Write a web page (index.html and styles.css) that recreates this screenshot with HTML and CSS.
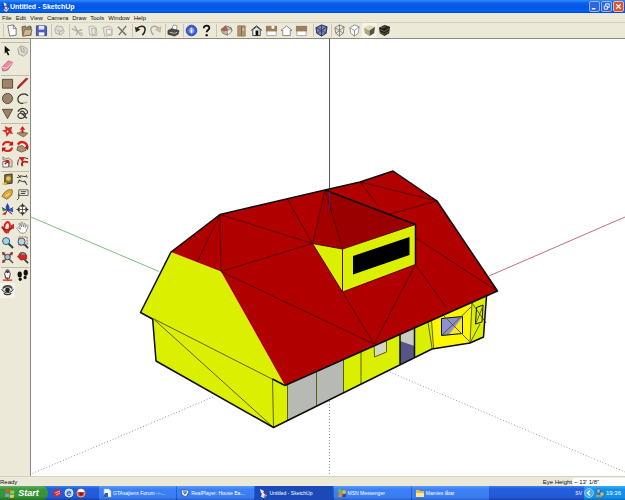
FILE: index.html
```html
<!DOCTYPE html>
<html lang="en">
<head>
<meta charset="utf-8">
<title>Untitled - SketchUp</title>
<link rel="stylesheet" href="styles.css">
</head>
<body>
<div class="desktop">
<header class="titlebar">
  <svg class="app-icon" viewBox="0 0 10 12"><path d="M2 1l4 2v3l-3-1zM4 6l5 2-3 4-3-2z" fill="#dfe9f5"/><path d="M5 5l3 2-2 3" stroke="#c03a28" fill="none"/><path d="M2 1l1 5 2 4" stroke="#1b2f6b" fill="none"/></svg>
  <h1 class="title">Untitled - SketchUp</h1>
  <div class="window-buttons">
    <button class="win" aria-label="Minimize"><svg viewBox="0 0 10 10"><path d="M2 7.500h4" stroke="#fff" stroke-width="1.500"/></svg></button>
    <button class="win" aria-label="Restore"><svg viewBox="0 0 10 10"><path d="M4 4V2h4v4H6M2.500 4.500h3.500v3.500h-3.500z" stroke="#fff" fill="none"/></svg></button>
    <button class="win close" aria-label="Close"><svg viewBox="0 0 10 10"><path d="M2.500 2.500l5 5m0-5l-5 5" stroke="#fff" stroke-width="1.300"/></svg></button>
  </div>
</header>
<nav class="menubar">
  <button>File</button><button>Edit</button><button>View</button><button>Camera</button><button>Draw</button><button>Tools</button><button>Window</button><button>Help</button>
</nav>
<div class="toolbar">
  <div class="group">
    <button aria-label="New"><svg viewBox="0 0 14 14"><path d="M3 2l6-1 3 4v7l-7 1z" fill="#fff" stroke="#555" stroke-width=".8"/><path d="M9 1v4h3" fill="none" stroke="#555" stroke-width=".7"/></svg></button>
    <button aria-label="Open"><svg viewBox="0 0 14 14"><path d="M2 3l4-1 1 2 5-1v9l-9 1z" fill="#a48a62" stroke="#4d4634" stroke-width=".7"/><path d="M5 6h8l-2 6-8 1z" fill="#cdb68b" stroke="#5b4d34" stroke-width=".6"/><path d="M8 3l3-1 1 2" stroke="#2d6f8a" fill="none"/></svg></button>
    <button aria-label="Save"><svg viewBox="0 0 14 14"><path d="M1.500 2h10l1 1v9.500h-11z" fill="#4a5fc0" stroke="#2a3780" stroke-width=".8"/><path d="M4 2h6v4H4z" fill="#e6ebfb"/><path d="M4 9h6v3.500H4z" fill="#fff"/></svg></button>
  </div>
  <div class="group">
    <button aria-label="Make Component"><svg viewBox="0 0 14 14"><path d="M4 2l6 1 2 5-3 4-6-2-1-4z" fill="#deddd2" stroke="#b0afa6"/><path d="M4 6l3 2 4-1M7 8v4" stroke="#aaa" fill="none"/></svg></button>
  </div>
  <div class="group">
    <button aria-label="Cut"><svg viewBox="0 0 14 14"><path d="M4 2l3 6 3 3M1 5l6 3 5-2M7 8l-1 4" stroke="#aaa9a1" fill="none" stroke-width="1.300"/><circle cx="11" cy="11" r="1.500" fill="none" stroke="#aaa9a1"/></svg></button>
    <button aria-label="Copy"><svg viewBox="0 0 14 14"><path d="M3 3l5-1 2 2v7l-6 1zM6 5l5-1 1 8-5 1z" fill="#e9e8de" stroke="#b3b2a9"/></svg></button>
    <button aria-label="Paste"><svg viewBox="0 0 14 14"><path d="M2 4l7-2 3 3v7l-8 1z" fill="#e3e2d8" stroke="#b3b2a9"/><path d="M6 6h5v5H6z" fill="#f3f2ea" stroke="#b9b8af"/></svg></button>
    <button aria-label="Delete"><svg viewBox="0 0 14 14"><path d="M2 3l9 9M11 2l-8 10" stroke="#77766f" stroke-width="1.600"/></svg></button>
  </div>
  <div class="group">
    <button aria-label="Undo"><svg viewBox="0 0 14 14"><path d="M3 5c4-4 9-3 9 1 0 2-1 4-3 6" stroke="#26221c" fill="none" stroke-width="1.600"/><path d="M1 3l1 6 5-3z" fill="#26221c"/></svg></button>
    <button aria-label="Redo"><svg viewBox="0 0 14 14"><path d="M11 5c-4-4-9-3-9 1 0 2 1 4 3 6" stroke="#a5a49b" fill="none" stroke-width="1.400"/><path d="M13 3l-1 6-5-3z" fill="#c5c4ba" stroke="#a5a49b" stroke-width=".6"/></svg></button>
  </div>
  <div class="group">
    <button aria-label="Print"><svg viewBox="0 0 14 14"><path d="M5 6l2-5 4 1-1 5z" fill="#fff" stroke="#555" stroke-width=".6"/><path d="M1 7l4-2 8 2-1 4-4 2-7-2z" fill="#4b4a46" stroke="#222" stroke-width=".6"/><path d="M3 9l5 1 3-1" stroke="#c8c6b8" fill="none"/></svg></button>
  </div>
  <div class="group">
    <button aria-label="Model Info"><svg viewBox="0 0 14 14"><circle cx="7" cy="7" r="5.700" fill="#3f5fd0" stroke="#2743a4"/><circle cx="7" cy="7" r="3" fill="#86a0ef"/><path d="M7 4v1M7 6v4" stroke="#fff" stroke-width="1.500"/></svg></button>
    <button aria-label="Help"><svg viewBox="0 0 14 14"><path d="M4 4.500C4 0.500 10.500 1 10 4.500 9.800 6.500 7.200 6.500 7.200 9" stroke="#111" fill="none" stroke-width="2"/><circle cx="7.200" cy="12" r="1.300" fill="#111"/></svg></button>
  </div>
  <div class="group views">
    <button aria-label="Iso"><svg viewBox="0 0 14 14"><path d="M1 6l5-4 6 2 1 3-5 5-5-2z" fill="#c9b9a4" stroke="#5d4b3d" stroke-width=".7"/><path d="M1 6l5-4 3 5-5 1z" fill="#9f6554"/><path d="M8 7l4-2v4l-4 3z" fill="#f4f1e8" stroke="#555" stroke-width=".5"/></svg></button>
    <button aria-label="Top"><svg viewBox="0 0 14 14"><path d="M3 2h8v11H3z" fill="#b3946b" stroke="#7d6647" stroke-width=".7"/><path d="M7 2v11" stroke="#7d6647"/><path d="M8 5h2v2H8z" fill="#dfcfb5"/></svg></button>
    <button aria-label="Front"><svg viewBox="0 0 14 14"><path d="M1 7l6-5 6 5M3 6v6.500h8V6L7 3z" fill="#fff" stroke="#333"/><path d="M6 7h3v5.500H6z" fill="#111"/></svg></button>
    <button aria-label="Right"><svg viewBox="0 0 14 14"><path d="M2 7h10v5.500H2z" fill="#fff" stroke="#888" stroke-width=".7"/><path d="M1 2h12v6H1z" fill="#9b7f61"/><path d="M7 2h3v3H7z" fill="#fff"/></svg></button>
    <button aria-label="Back"><svg viewBox="0 0 14 14"><path d="M1 7l6-5 6 5h-2v5.500H3V7z" fill="#fff" stroke="#777" stroke-width=".9"/></svg></button>
    <button aria-label="Left"><svg viewBox="0 0 14 14"><path d="M2 7h10v5.500H2z" fill="#fff" stroke="#888" stroke-width=".7"/><path d="M1 2h12v6H1z" fill="#9b7f61"/></svg></button>
  </div>
  <div class="group">
    <button aria-label="X-Ray"><svg viewBox="0 0 14 14"><path d="M1 4l6-3 6 2-1 7-5 3-5-3z" fill="#777fb8" stroke="#222850"/><path d="M1 4l6 3 6-4M7 7v6M2 10l5-3 5 3M7 1v6" fill="none" stroke="#222850" stroke-width=".7"/></svg></button>
  </div>
  <div class="group">
    <button aria-label="Wireframe"><svg viewBox="0 0 14 14"><path d="M2 4l5-3 5 2-1 7-4 3-4-3zM2 4l5 3 5-4M7 7v6M3 10l4-3 4 3M7 1v6" fill="none" stroke="#696962" stroke-width=".8"/></svg></button>
    <button aria-label="Hidden Line"><svg viewBox="0 0 14 14"><path d="M2 4l5-3 5 2-1 7-4 3-4-3z" fill="#fff" stroke="#777" stroke-width=".8"/><path d="M2 4l5 3 5-4M7 7v6" fill="none" stroke="#777" stroke-width=".8"/></svg></button>
    <button class="pressed" aria-label="Shaded"><svg viewBox="0 0 14 14"><path d="M1 4l6-3 6 2-6 4z" fill="#dedcae"/><path d="M1 4l6 3v6l-5-3z" fill="#a9a77c"/><path d="M13 3L7 7v6l5-3z" fill="#55533b"/></svg></button>
    <button aria-label="Shaded With Textures"><svg viewBox="0 0 14 14"><path d="M1 4l6-3 6 2-1 7-5 3-5-3z" fill="#25221b"/><path d="M2 6l5 2 5-3M2 9l5 2 5-3M3 4l5-1" stroke="#8c8367" fill="none" stroke-width=".7"/></svg></button>
  </div>
</div>
<main class="workspace">
  <aside class="palette">
    <div class="tools">
      <button aria-label="Select"><svg viewBox="0 0 14 14"><path d="M4 2l6 5-3 .5 2 4-1.500 1-2-4-1.500 2z" fill="#111"/></svg></button>
      <button aria-label="Component"><svg viewBox="0 0 14 14"><path d="M2 5l3-3 4 1 3 2v5l-4 3-5-2z" fill="#dcdbd2" stroke="#a4a39b"/><path d="M5 3l1 5 4 1M8 4l1 3" stroke="#98978f" fill="none"/></svg></button>
      <button aria-label="Eraser"><svg viewBox="0 0 14 14"><path d="M1 9l7-7 5 2-6 8-5 1z" fill="#e88fa2" stroke="#a34f66" stroke-width=".7"/><path d="M1 9l5 1 7-6" stroke="#fbd0d6" fill="none"/></svg></button>
    </div>
    <div class="tools">
      <button aria-label="Rectangle"><svg viewBox="0 0 14 14"><path d="M1.500 2.500h11v9.500h-11z" fill="#9c8469" stroke="#554636"/></svg></button>
      <button aria-label="Line"><svg viewBox="0 0 14 14"><path d="M2 12l1-3 8-8 2 1-8 8z" fill="#d31d24" stroke="#79151a" stroke-width=".5"/><path d="M1 13l1-3 2 1.500z" fill="#222"/></svg></button>
      <button aria-label="Circle"><svg viewBox="0 0 14 14"><circle cx="7" cy="7" r="5.500" fill="#9c8469" stroke="#554636"/></svg></button>
      <button aria-label="Arc"><svg viewBox="0 0 14 14"><path d="M13 4C9 0 2 3 2 8c0 3 3 5 6 4" stroke="#333" fill="none" stroke-width="1.300"/><path d="M8 12l4-1" stroke="#c9a477" stroke-width="1.500"/></svg></button>
      <button aria-label="Polygon"><svg viewBox="0 0 14 14"><path d="M1.500 2.500h11L7 12.500z" fill="#9c8469" stroke="#554636"/></svg></button>
      <button aria-label="Freehand"><svg viewBox="0 0 14 14"><path d="M2 5c3-5 8-4 10-1 2 4-3 4-6 3-3-2 1-4 3-1 3 4-1 7-5 6-4-2-1-6 2-5 3 2 3 4 6 5" stroke="#333" fill="none" stroke-width="1.200"/></svg></button>
    </div>
    <div class="tools">
      <button aria-label="Move"><svg viewBox="0 0 14 14"><path d="M4 1l4 2 4-1-1 4 2 4-4-1-3 4-1-5-4-2 4-1z" fill="#d62a24"/><circle cx="7" cy="7" r="1" fill="#ece9d8"/></svg></button>
      <button aria-label="Push/Pull"><svg viewBox="0 0 14 14"><path d="M1 9l5-2 7 2-5 4z" fill="#a38c6c" stroke="#5d4b38" stroke-width=".6"/><path d="M6 9V5H4l3-4 3 4H8v4z" fill="#d02420"/></svg></button>
      <button aria-label="Rotate"><svg viewBox="0 0 14 14"><path d="M2 6c1-5 8-5 10-1M12 8c-1 5-8 5-10 1" stroke="#d4241f" fill="none" stroke-width="2.200"/><path d="M13 1v5H8zM1 13V8h5z" fill="#b51c19"/></svg></button>
      <button aria-label="Follow Me"><svg viewBox="0 0 14 14"><path d="M2 5c3-5 11-3 10 4" stroke="#d4241f" fill="none" stroke-width="2.500"/><path d="M2 7l5-1 4 5-5 2-5-2z" fill="#ad9470" stroke="#4b3a2a" stroke-width=".7"/><path d="M13 6v5l-4-3z" fill="#9d1d19"/></svg></button>
      <button aria-label="Scale"><svg viewBox="0 0 14 14"><path d="M2 7h6v6H2z" fill="#fff" stroke="#666"/><path d="M2 2l3 2 3-1 4 3v7H9V7L2 5z" fill="#d8cabb" stroke="#655" stroke-width=".6"/><path d="M4 10l4-4M8 6v3M8 6H5" stroke="#c41f1b" stroke-width="1.500" fill="none"/></svg></button>
      <button aria-label="Offset"><svg viewBox="0 0 14 14"><path d="M2 11C1 4 5 1 13 4" stroke="#5d1818" fill="none"/><path d="M7 12C5 8 8 6 13 8" stroke="#ad201d" fill="none" stroke-width="2"/><path d="M3 2l6 1-2 5z" fill="#c62520"/></svg></button>
    </div>
    <div class="tools">
      <button aria-label="Tape Measure"><svg viewBox="0 0 14 14"><path d="M4 2l8-1v10l-8 1z" fill="#81713d" stroke="#3c3521"/><circle cx="8" cy="6" r="2.500" fill="#e8c64d"/><path d="M1 11l5-1v2l-5 1z" fill="#edc93c"/></svg></button>
      <button aria-label="Dimension"><svg viewBox="0 0 14 14"><path d="M2 2l3 3M1 5l4-1M4 3l7 1M11 2l1 3M3 8l8 2M9 8l3 5M2 11l2-4" stroke="#333" fill="none"/></svg></button>
      <button aria-label="Protractor"><svg viewBox="0 0 14 14"><path d="M1 9C4 3 8 1 12 2c1 4-1 8-6 10z" fill="#dda83c" stroke="#755620" stroke-width=".8"/><path d="M4 9l5-4v2L6 9z" fill="#f5df9f"/></svg></button>
      <button aria-label="Text"><svg viewBox="0 0 14 14"><path d="M3 2h10v6H3z" fill="#f6f5ed" stroke="#555"/><path d="M5 4h6M5 6h5" stroke="#333"/><path d="M3 6v5l-2 2" stroke="#333" fill="none"/></svg></button>
      <button aria-label="Axes"><svg viewBox="0 0 14 14"><path d="M7 8V1M7 8L1 5M7 8l6-3M7 8l-4 4M7 8l5 4" stroke="#222" fill="none"/><path d="M5 4l2-4 2 4v4H6z" fill="#2441c1"/><path d="M7 8l6-2v4z" fill="#2754c4"/><path d="M7 8l-2 5-4-1z" fill="#d12724"/><path d="M1 5l5 3-4 1z" fill="#289347"/></svg></button>
      <button aria-label="Section Plane"><svg viewBox="0 0 14 14"><circle cx="7" cy="7" r="4.500" fill="#fbfaf2" stroke="#333"/><path d="M7 0l2 4H5zM7 14l2-4H5zM0 7l4-2v4zM14 7l-4-2v4z" fill="#333"/><path d="M4 7h6M7 4v6" stroke="#555"/></svg></button>
    </div>
    <div class="tools">
      <button aria-label="Orbit"><svg viewBox="0 0 14 14"><path d="M5 12C2 8 4 2 7 1c4 1 3 8 0 12" stroke="#d12724" fill="none" stroke-width="2"/><path d="M1 6c2 5 8 5 12 0" stroke="#b01c1b" fill="none" stroke-width="2"/><path d="M10 5l4-2v6zM2 10l6-1-2 5z" fill="#d12724"/></svg></button>
      <button aria-label="Pan"><svg viewBox="0 0 14 14"><path d="M5 13L1 8l1-1 3 2-2-6 1-.5 2 4-.5-5h1.500l1 5 1-4 1 .5v4l2-3 1 1-2 6-2 2z" fill="#fff" stroke="#777" stroke-width=".8"/></svg></button>
      <button aria-label="Zoom"><svg viewBox="0 0 14 14"><path d="M8 8l5 5" stroke="#303f50" stroke-width="2.200"/><circle cx="5.500" cy="5.500" r="3.800" fill="#9fd4e8" stroke="#35506b"/></svg></button>
      <button aria-label="Zoom Window"><svg viewBox="0 0 14 14"><path d="M3 1h9v9H3z" fill="none" stroke="#b5423f" stroke-dasharray="2 1"/><path d="M9 9l4 4" stroke="#303f50" stroke-width="2"/><circle cx="6" cy="6" r="3.800" fill="#b4d5e3" stroke="#35506b"/></svg></button>
      <button aria-label="Zoom Extents"><svg viewBox="0 0 14 14"><path d="M1 1l4 1-3 3zM13 1L9 2l3 3zM1 13l4-1-3-3z" fill="#b12522"/><path d="M8 8l5 5M2 2l9 9M12 2l-9 9" stroke="#63433d" stroke-width="1.500"/><circle cx="7" cy="6.500" r="3" fill="#a5bec9" stroke="#444"/></svg></button>
      <button aria-label="Previous View"><svg viewBox="0 0 14 14"><path d="M9 9l4 4" stroke="#303f50" stroke-width="2"/><circle cx="7" cy="5.500" r="4" fill="#819aae" stroke="#433"/><path d="M1 6l5-4v2h6v5H6v2z" fill="#d12724"/></svg></button>
    </div>
    <div class="tools">
      <button aria-label="Position Camera"><svg viewBox="0 0 14 14"><path d="M5 10l-1-5 2-4h2l2 4-1 5z" fill="#fff" stroke="#333"/><circle cx="7" cy="3" r="1.500" fill="#333"/><path d="M2 12h10M6 9l2 4" stroke="#c22a24" stroke-width="1.300"/></svg></button>
      <button aria-label="Walk"><svg viewBox="0 0 14 14"><ellipse cx="4" cy="6" rx="2.300" ry="3.200" fill="#111"/><ellipse cx="4.500" cy="11" rx="1.700" ry="1.800" fill="#111"/><ellipse cx="10.500" cy="4" rx="2.300" ry="3.200" fill="#111"/><ellipse cx="9.800" cy="9.200" rx="1.700" ry="1.800" fill="#111"/></svg></button>
      <button class="pressed" aria-label="Look Around"><svg viewBox="0 0 14 14"><path d="M1 6c3-4 9-4 12 0-2 4-9 5-12 0z" fill="#ddd" stroke="#222"/><circle cx="7" cy="6.500" r="2.500" fill="#222"/><path d="M2 4c3-3 8-3 10 0M3 10c2 2 6 2 8 0" stroke="#333" fill="none" stroke-width="1.300"/></svg></button>
    </div>
  </aside>
  <svg class="model" viewBox="31 39 594 437" preserveAspectRatio="xMidYMid slice" role="img" aria-label="House model">
    <!-- axes -->
    <path d="M31 217L159 271.500" stroke="#7fbc85"/>
    <path d="M489 276L625 217" stroke="#c4707c"/>
    <path d="M329.500 39V191" stroke="#555a73"/>
    <path class="dotted" d="M213 397L31 474" stroke="#a58f91"/>
    <path class="dotted" d="M387 371L625 472" stroke="#8fa593"/>
    <path class="dotted" d="M329.500 401V476" stroke="#8c8ca3"/>
    <!-- walls -->
    <path d="M152.500 317L156 361 273.500 427.500 432 349 470 343 483.500 337 486.500 295 400 310 285 370z" fill="#dbf000"/>
    <path d="M432 318L472 300 470 343 432 349z" fill="#fff700"/>
    <path d="M287.500 383L343.500 358V393L287.500 420.500z" fill="#b7b9b5"/>
    <path class="edge" d="M287.500 384V420.500M316.500 371V406.500M343.500 359V393M361 352V384.500M272.500 379L273.500 427.500M153 318.500L273.500 427.500M428 322L432 348M431.500 320L433.500 348M472 302L470 343M472 303L486 323M470 343L480 324"/>
    <path class="edge" d="M374 344L386.500 340.500V352L374.500 357z" fill="#d5d7c5"/>
    <path d="M400 334L414.500 327V357L400 364z" fill="#c9cbc2"/>
    <path d="M400 341L414.500 346V357L400 364z" fill="#555587"/>
    <path class="outline" d="M400 334V364M414.500 327V357"/>
    <path d="M441.500 318.500L462.500 316.500V333.500L441.500 335.500z" fill="#8d8fd0"/>
    <path d="M462.500 317V333.500L449 334.500z" fill="#f8e928"/>
    <path class="outline thin" d="M441.500 318.500L462.500 316.500V333.500L441.500 335.500zM476.500 307.500L483 305 482 322 475.500 324z"/>
    <path class="edge" d="M441 313L470 342M442 335L471 307M476 323L483 306"/>
    <path class="outline" d="M152.500 317L156 361 273.500 427.500 432 349 470 343 483.500 337 486.500 296"/>
    <!-- gable and roof -->
    <path d="M171 252L221 271.500 285 385.500 140.500 312.500z" fill="#dbf000"/>
    <path class="edge" d="M153 318.500L273 379.500"/>
    <path d="M171 252L220 214.500 325 190 360 182 393 171 437 201 497.500 291 285 385.500 221 271.500z" fill="#b00000"/>
    <path class="seam" d="M220 214.500L197 262M220 214.500L221 271.500M220 214.500L312.500 243.500L221 271.500L374 344M287.500 199.500L312.500 243.500M342.500 292L374 344L415.500 264.500L446 307M416 238L497 291M390 214L437 201L360 182L378 206"/>
    <path class="outline" d="M285 385.500L272.500 379M152.500 319L140.500 312.500 171 252 220 214.500 325 190 360 182 393 171 437 201 497.500 291 285 385.500"/>
    <!-- dormer -->
    <path d="M325 190L415.500 224.500 342.500 249 312.500 243.500z" fill="#9b0000"/>
    <path d="M325 190L312.500 243.500 342.500 249z" fill="#a40000"/>
    <path d="M312.500 243.500L342.500 249 415.500 224.500V264.500L342.500 292z" fill="#dbf000"/>
    <path d="M353 256L409.500 237V255L353 274.500z" fill="#000"/>
    <path class="seam" d="M312.500 243.500L325 190 342.500 249V292M342.500 249L415.500 224.500M312.500 243.500L342.500 249M312.500 243.500L342.500 292L415.500 264.500"/>
    <path class="outline" d="M325 190L415.500 224.500V264.500"/>
    <path d="M329.500 192V211" stroke="#4a2364"/>
  </svg>
</main>
<footer class="statusbar">
  <span>Ready</span>
  <div class="measure"><label for="eye">Eye Height</label><input id="eye" type="text" value="~ 13' 1/8&quot;"></div>
</footer>
<div class="taskbar">
  <button class="start"><svg viewBox="0 0 12 12"><path d="M1 2q2-1.500 4.500 0L5 6Q3 5 .5 6z" fill="#e9562c"/><path d="M6.500 2.500Q9 4 11.500 2.500L11 6.500q-2.500 1-5 0z" fill="#8ed14a"/><path d="M.5 7Q3 6 5 7l-.5 4Q2 10 0 11z" fill="#6ba5f5"/><path d="M6 7.500q2.500 1.500 5 0l-.5 4q-2.500 1-5 0z" fill="#f6cc3a"/></svg><span>Start</span></button>
  <div class="quick">
    <button aria-label="Mail"><svg viewBox="0 0 10 10"><path d="M1 4l3-3 4 1 1 5-4 2-3-1z" fill="#c92d35"/><path d="M3 5l5-2M4 7l4-2" stroke="#f7b9ad"/></svg></button>
    <button aria-label="Browser"><svg viewBox="0 0 10 10"><circle cx="5" cy="5" r="4" fill="#a9cff5" stroke="#e9f4ff"/><path d="M3 5h4M7 5a2 2 0 1 0-.5 2" stroke="#245dae" fill="none"/></svg></button>
    <button aria-label="Media"><svg viewBox="0 0 10 10"><circle cx="5" cy="5" r="4" fill="#d93b26" stroke="#f2ae75"/><path d="M2 4a3 3 0 0 1 6 0z" fill="#fff"/><circle cx="5" cy="6" r="1.500" fill="#542428"/></svg></button>
  </div>
  <div class="tasks">
    <button class="task"><svg viewBox="0 0 10 10"><path d="M2 1h5l2 2v6H2z" fill="#fff" stroke="#9fb8d8" stroke-width=".6"/><path d="M3 5h3v4H1z" fill="#355dae"/></svg><span>GTAsajtens Forum -:-...</span></button>
    <button class="task"><svg viewBox="0 0 10 10"><path d="M1 2h7l1 2-3 5-4-2z" fill="#e5eefb" stroke="#203f86" stroke-width=".7"/><path d="M3 4h4M4 6l2-1" stroke="#203f86"/></svg><span>RealPlayer: House Ba...</span></button>
    <button class="task active"><svg viewBox="0 0 10 10"><path d="M2 1l4 2v3l-3-1zM4 5l5 2-3 3-3-1z" fill="#e6edf8"/><path d="M5 4l3 2-2 3" stroke="#c03a28" fill="none"/></svg><span>Untitled - SketchUp</span></button>
    <button class="task"><svg viewBox="0 0 10 10"><circle cx="3" cy="3" r="2" fill="#72b84a"/><path d="M1 9l1-4h3l1 4z" fill="#d7893d"/><circle cx="7" cy="4" r="2" fill="#e9b53e"/><path d="M5 9l1-3h3v3z" fill="#314f88"/></svg><span>MSN Messenger</span></button>
    <button class="task"><svg viewBox="0 0 10 10"><path d="M1 2h3l1 1h4v6H1z" fill="#e9b83e"/><path d="M1 5h8v4H1z" fill="#ffe88a"/></svg><span>Mamies låtar</span></button>
  </div>
  <span class="lang">SV</span>
  <div class="tray">
    <svg viewBox="0 0 10 10"><circle cx="5" cy="5" r="4.500" fill="#48a9f8" stroke="#c6e8ff" stroke-width=".6"/><path d="M6 2.500L3.500 5 6 7.500" stroke="#fff" fill="none" stroke-width="1.300"/></svg>
    <svg viewBox="0 0 10 10"><path d="M2 1h3v4H2zM5 4h4v4H5z" fill="#a9c6c3" stroke="#375a77" stroke-width=".7"/><path d="M1 8h6" stroke="#d7a53a" stroke-width="1.500"/></svg>
    <time>19:36</time>
  </div>
</div>
</div>
</body>
</html>
```
FILE: styles.css
```css
* { box-sizing: border-box; }

body {
  margin: 0;
  font-family: "Liberation Sans", sans-serif;
  font-size: 6px;
  color: #111;
  background: #ece9d8;
}

button {
  display: flex;
  align-items: center;
  justify-content: center;
  margin: 0;
  padding: 0;
  border: 0;
  background: none;
  font: inherit;
  color: inherit;
  white-space: nowrap;
}

svg { display: block; }

.desktop {
  display: flex;
  flex-direction: column;
  height: 100vh;
}

.titlebar {
  display: flex;
  align-items: center;
  flex: 0 0 13px;
  padding: 0 1px;
  background: linear-gradient(#2f8cf8, #0a5fec 25%, #0054e3 60%, #0463f6 85%, #0148c8);
}

.app-icon { width: 9px; height: 11px; }

.title {
  flex: 1;
  margin: 0;
  font-size: 7px;
  font-weight: bold;
  line-height: 12px;
  color: #fff;
}

.window-buttons { display: flex; gap: 1px; }

.win {
  width: 11px;
  height: 11px;
  border: 1px solid #8fb5f7;
  border-radius: 2px;
  background: #2c66e0;
}

.win svg { width: 9px; height: 9px; }
.close { background: #df5330; border-color: #efb5a5; }

.menubar {
  display: flex;
  flex: 0 0 10px;
  gap: 4px;
  padding: 0 2px;
  border-bottom: 1px solid #d5d2c2;
}

.toolbar {
  display: flex;
  flex: 0 0 16px;
  gap: 3px;
  padding: 0 4px;
  border-bottom: 1px solid #8d8b80;
}

.group { display: flex; box-shadow: -2px 0 0 -1px #c9c6b6; }
.views { padding: 0 2px; }
.group button, .tools button { width: 15px; height: 15px; }
.group svg, .tools svg { width: 13px; height: 13px; }
.group .pressed, .tools .pressed { background: #f6f4ea; }

.workspace {
  display: flex;
  flex: 1;
  min-height: 0;
}

.palette {
  display: flex;
  flex-direction: column;
  flex: 0 0 31px;
  gap: 3px;
  padding-top: 4px;
  border-right: 1px solid #8d8b80;
}

.tools {
  display: grid;
  grid-template-columns: 15px 15px;
  box-shadow: 0 -2px 0 -1px #bfbcae;
}

.model {
  flex: 1;
  min-width: 0;
  height: 100%;
  background: #fff;
  fill: none;
  stroke-width: 1;
}

.dotted { stroke-dasharray: 1 2; }
.edge { stroke: #5d6010; stroke-width: 1; }
.seam { stroke: #5e0202; stroke-width: 1; }
.outline { stroke: #0c0c0c; stroke-width: 1.5; stroke-linejoin: round; }
.thin { stroke-width: 1; }

.statusbar {
  display: flex;
  align-items: center;
  justify-content: space-between;
  flex: 0 0 10px;
  border-top: 1px solid #d5d2c2;
}

.measure { display: flex; align-items: center; gap: 1px; }

.measure input {
  width: 52px;
  height: 8px;
  padding: 0 1px;
  border: 0;
  background: #fff;
  font: inherit;
  color: inherit;
}

.taskbar {
  display: flex;
  flex: 0 0 14px;
  font-size: 5px;
  color: #fff;
  background: linear-gradient(#3b82f0, #245edb 20%, #2359d6 80%, #1941a5);
}

.start {
  flex: 0 0 48px;
  gap: 3px;
  padding-right: 4px;
  border-radius: 0 6px 6px 0;
  background: linear-gradient(#5fae5f, #3a953a 25%, #379337 75%, #28702a);
  font-size: 9px;
  font-weight: bold;
  font-style: italic;
}

.start svg { width: 10px; height: 10px; }

.quick {
  display: flex;
  flex: 0 0 51px;
  gap: 2px;
  padding-left: 4px;
}

.quick svg, .task svg, .tray svg { flex: none; width: 10px; height: 10px; }

.tasks { display: flex; flex: 0 1 390px; gap: 1px; min-width: 0; }

.task {
  flex: 1;
  justify-content: flex-start;
  gap: 1px;
  min-width: 0;
  padding-left: 3px;
  overflow: hidden;
  border-radius: 1px;
  background: linear-gradient(#5a9bff, #3c81f3 25%, #3a7df0 80%, #2a62cc);
}

.task.active { background: #1b4ab8; }

.lang { margin: 0 2px 0 auto; line-height: 14px; }

.tray {
  display: flex;
  align-items: center;
  gap: 1px;
  padding: 0 4px 0 0;
  background: linear-gradient(#36b2f7, #118fe9 25%, #1290e8 80%, #0c6fc0);
  font-size: 6px;
}
```
